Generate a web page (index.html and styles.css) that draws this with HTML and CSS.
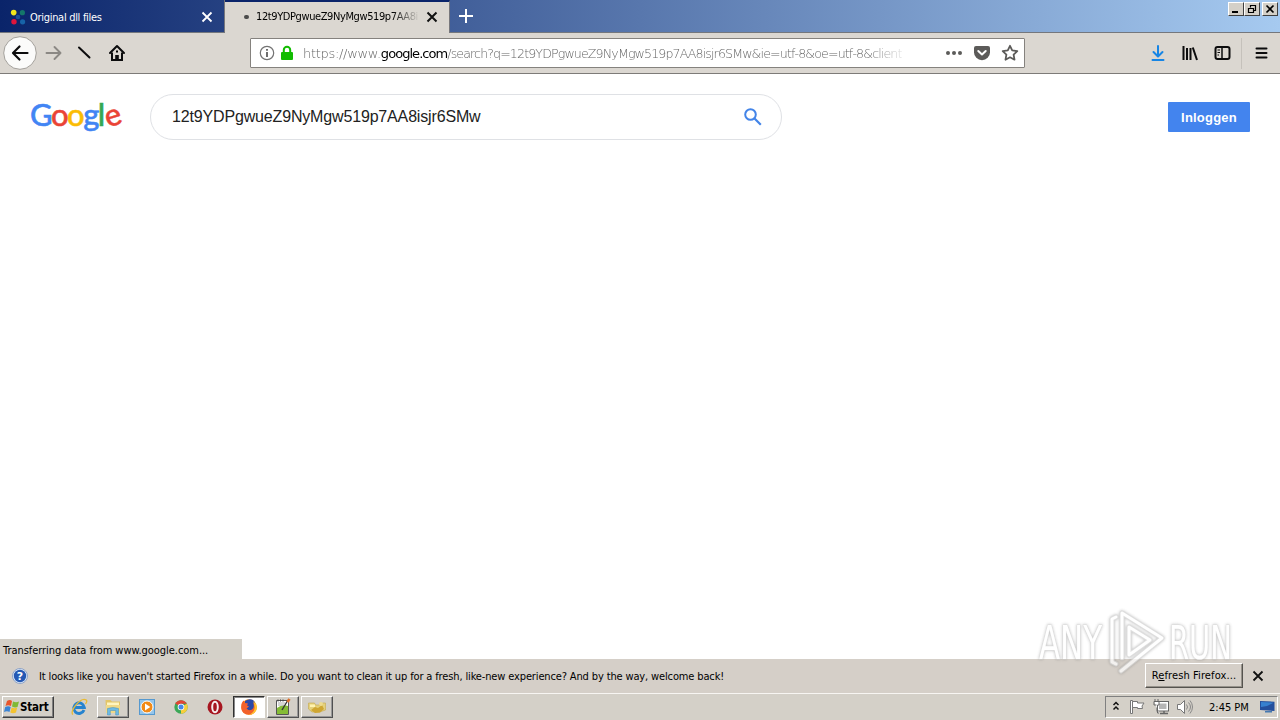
FILE: index.html
```html
<!DOCTYPE html>
<html lang="en">
<head>
<meta charset="utf-8">
<title>Google search</title>
<link rel="stylesheet" href="styles.css">
</head>
<body>
<div class="tabs">
  <div class="tab">
    <svg class="favicon" width="16" height="16" viewBox="0 0 16 16"><circle cx="3.700" cy="3.600" r="2.800" fill="#f2e51c"/><circle cx="12.400" cy="3.700" r="2.600" fill="#14776a"/><circle cx="8" cy="8" r="2.300" fill="#1c4f99"/><circle cx="4" cy="12.800" r="2.700" fill="#e0153b"/><circle cx="12.600" cy="12.800" r="2.600" fill="#1763a8"/></svg>
    <span class="tab-title first">Original dll files</span>
    <svg class="tab-close" width="12" height="12" viewBox="0 0 12 12"><path d="M1.500 1.500l9 9M10.500 1.500l-9 9" stroke="#fff" stroke-width="1.800"/></svg>
  </div>
  <div class="tab active">
    <i class="loading"></i>
    <span class="tab-title second">12t9YDPgwueZ9NyMgw519p7AA8i</span>
    <svg class="tab-close" width="12" height="12" viewBox="0 0 12 12"><path d="M1.500 1.500l9 9M10.500 1.500l-9 9" stroke="#111" stroke-width="2"/></svg>
  </div>
  <svg class="plus" width="16" height="16" viewBox="0 0 16 16"><path d="M8 1v14M1 8h14" stroke="#fff" stroke-width="2"/></svg>
  <div class="win">
    <span class="wbtn"><svg width="14" height="12"><path d="M3 9h6" stroke="#000" stroke-width="2"/></svg></span>
    <span class="wbtn"><svg width="14" height="12"><path d="M5.500 4.500v-2h5v5h-2M5 2.500h6M3.500 5.500h5v4h-5zM3 5.500h6" fill="none" stroke="#000" stroke-width="1.200"/></svg></span>
    <span class="wbtn last"><svg width="14" height="12"><path d="M3.500 2.500l7 7M10.500 2.500l-7 7" stroke="#000" stroke-width="1.700"/></svg></span>
  </div>
</div>
<div class="toolbar">
  <svg class="back" width="34" height="34" viewBox="0 0 34 34"><circle cx="17" cy="17" r="16.300" fill="#fbfbfa" stroke="#a3a09b"/><path d="M24.500 17H10.500M16.500 10.500L10 17l6.500 6.500" fill="none" stroke="#0c0c0d" stroke-width="2.200" stroke-linecap="round" stroke-linejoin="round"/></svg>
  <svg class="fwd" width="18" height="16" viewBox="0 0 18 16"><path d="M1.500 8h14M9.500 2L15.500 8l-6 6" fill="none" stroke="#8b8884" stroke-width="1.900" stroke-linecap="round" stroke-linejoin="round"/></svg>
  <svg class="slash" width="16" height="16" viewBox="0 0 16 16"><path d="M3 2.500l10.500 10" stroke="#0c0c0d" stroke-width="2" stroke-linecap="round"/></svg>
  <svg class="home" width="18" height="18" viewBox="0 0 18 18"><path d="M2 9l7-7 7 7" fill="none" stroke="#0c0c0d" stroke-width="2" stroke-linecap="round" stroke-linejoin="round"/><path d="M4 8.500V16h10V8.500" fill="none" stroke="#0c0c0d" stroke-width="2"/><path d="M7.200 16v-5h3.600v5z" fill="#0c0c0d"/><rect x="8" y="6.500" width="2" height="2"/></svg>
  <div class="url">
    <svg width="16" height="16" viewBox="0 0 16 16"><circle cx="8" cy="8" r="6.700" fill="none" stroke="#737373" stroke-width="1.200"/><path d="M8 7v5M8 4v1.700" stroke="#555" stroke-width="1.700"/></svg>
    <svg class="lock" width="14" height="16" viewBox="0 0 14 16"><path d="M3.800 8V5a3.200 3.200 0 0 1 6.400 0v3" fill="none" stroke="#12bc00" stroke-width="2"/><rect x="1" y="7" width="12" height="8" rx="1" fill="#12bc00"/></svg>
    <span class="address"><span class="scheme">https://www.</span><b>google.com</b><span class="path">/search?q=12t9YDPgwueZ9NyMgw519p7AA8isjr6SMw&amp;ie=utf-8&amp;oe=utf-8&amp;client</span></span>
    <svg width="18" height="16" viewBox="0 0 18 16"><g fill="#5c5b59"><circle cx="3" cy="8" r="2"/><circle cx="9" cy="8" r="2"/><circle cx="15" cy="8" r="2"/></g></svg>
    <svg class="pocket" width="16" height="16" viewBox="0 0 16 16"><path d="M2 1h12a2 2 0 0 1 2 2v4.200a8 8 0 0 1-16 0V3a2 2 0 0 1 2-2z" fill="#5c5b59"/><path d="M4.300 6L8 9.500 11.700 6" fill="none" stroke="#fff" stroke-width="2" stroke-linecap="round" stroke-linejoin="round"/></svg>
    <svg width="18" height="18" viewBox="0 0 18 18"><path d="M9 1.800l2.200 4.600 5.100.7-3.700 3.500.9 5.100L9 13.300l-4.500 2.400.9-5.100L1.700 7.100l5.100-.7z" fill="none" stroke="#5c5b59" stroke-width="1.800" stroke-linejoin="round"/></svg>
  </div>
  <svg class="download" width="16" height="18" viewBox="0 0 16 18"><path d="M8 2v10M3.500 8L8 12.500 12.500 8M2.500 16h11" fill="none" stroke="#1685e5" stroke-width="2" stroke-linecap="round" stroke-linejoin="round"/></svg>
  <svg class="lib" width="16" height="16" viewBox="0 0 16 16"><path d="M1.500 1v14M5 3v12M8.500 3v12M10.800 2.500L15 15" fill="none" stroke="#0c0c0d" stroke-width="2"/></svg>
  <svg class="side" width="17" height="16" viewBox="0 0 17 16"><rect x="1.500" y="2" width="14" height="12" rx="2" fill="none" stroke="#0c0c0d" stroke-width="2"/><path d="M8 2v12" stroke="#0c0c0d" stroke-width="1.500"/><path d="M3.500 5H6M3.500 7.500H6M3.500 10H5" stroke="#0c0c0d"/></svg>
  <i class="sep"></i>
  <svg class="menu" width="14" height="14" viewBox="0 0 14 14"><path d="M1.500 2.500h10M1.500 7h10M1.500 11.500h10" stroke="#0c0c0d" stroke-width="2" stroke-linecap="round"/></svg>
</div>
<div class="page">
  <div class="header">
    <div class="logo"><span class="bl">G</span><span class="rd">o</span><span class="yl">o</span><span class="bl">g</span><span class="gr">l</span><span class="rd tilt">e</span></div>
    <div class="search"><span class="query">12t9YDPgwueZ9NyMgw519p7AA8isjr6SMw</span>
      <svg width="20" height="20" viewBox="0 0 20 20"><circle cx="7.500" cy="7.500" r="5.300" fill="none" stroke="#4384e8" stroke-width="2"/><path d="M11.300 11.300l6.500 6.500" stroke="#4384e8" stroke-width="2.200"/></svg>
    </div>
    <div class="login">Inloggen</div>
  </div>
  <div class="status"><span>Transferring data from www.google.com...</span></div>
</div>
<div class="notice">
  <svg width="16" height="16" viewBox="0 0 16 16"><circle cx="8" cy="8" r="7.500" fill="#dce8f7" stroke="#7c96c0" stroke-width=".8"/><circle cx="8" cy="8" r="6.200" fill="#2559b4"/><text x="8" y="12.200" text-anchor="middle" class="qmark">?</text></svg>
  <span class="notice-text">It looks like you haven't started Firefox in a while. Do you want to clean it up for a fresh, like-new experience? And by the way, welcome back!</span>
  <div class="refresh"><span>R<u>e</u>fresh Firefox...</span></div>
  <svg class="nclose" width="12" height="12" viewBox="0 0 12 12"><path d="M1.500 1.500l9 9M10.500 1.500l-9 9" stroke="#111" stroke-width="1.800"/></svg>
</div>
<div class="taskbar">
  <div class="start"><svg width="16" height="16" viewBox="0 0 16 16"><path d="M3 2q3-2 5 0L7 7Q4 5.500 1.500 7z" fill="#e9562b"/><path d="M9 2.500q3 1.500 6 0L13.500 8Q11 9 8 7.500z" fill="#80b936"/><path d="M1.200 8q3-1.500 5.500 0L5.500 13Q3 11.500 0 13z" fill="#3b84d4"/><path d="M7.700 8.500q3 1.500 5.500 0L12 13.500Q9 15 6.300 13.500z" fill="#f4c330"/></svg><span>Start</span></div>
  <div class="task ie"><svg width="18" height="18" viewBox="0 0 18 18"><path d="M14 12A5.300 5.300 0 1 1 14.300 9.500H5" fill="none" stroke="#2583cf" stroke-width="2.900"/><path d="M3 16.500C-1 14 10-1 16 1.800 17.500 2.500 16.500 4.500 15.500 6" fill="none" stroke="#e8ba34" stroke-width="1.300"/></svg></div>
  <div class="task raised"><svg width="18" height="18" viewBox="0 0 18 18"><path d="M1.500 2h5l1.500 1.500h8V15h-14z" fill="#e3c566"/><path d="M3 4.500h12V9H3z" fill="#fff5bf"/><path d="M2 7h14v8H2z" fill="#f0d987"/><path d="M3.500 17v-6.500q5.500-2 11 0V17h-2.800v-4.500H6.300V17z" fill="#6dbbe5" stroke="#438eb8" stroke-width=".5"/></svg></div>
  <div class="task"><svg width="18" height="18" viewBox="0 0 18 18"><rect x="1.500" y="1.500" width="15" height="15" fill="#94c5eb" stroke="#5699cf"/><circle cx="9" cy="9" r="6" fill="#f28a17" stroke="#fff"/><path d="M7 5.500l5.300 3.500L7 12.500z" fill="#fff"/></svg></div>
  <div class="task"><svg width="18" height="18" viewBox="0 0 18 18"><circle cx="9" cy="9" r="6.700" fill="#3ba757"/><path d="M9 9L3.200 5.600A6.700 6.700 0 0 1 14.800 5.700H9z" fill="#e24435"/><path d="M9 9l5.800-3.300A6.700 6.700 0 0 1 9 15.700z" fill="#f8ce3a"/><circle cx="9" cy="9" r="3.300" fill="#fff"/><circle cx="9" cy="9" r="2.500" fill="#4587e8"/></svg></div>
  <div class="task"><svg width="18" height="18" viewBox="0 0 18 18"><circle cx="9" cy="9" r="7.500" fill="#a71620"/><ellipse cx="9" cy="9" rx="2.800" ry="5.200" fill="#a71620" stroke="#f5eeee" stroke-width="2"/></svg></div>
  <div class="task pressed"><svg width="18" height="18" viewBox="0 0 18 18"><circle cx="9" cy="9" r="7.800" fill="#ff9a1c"/><path d="M5 3q4-3 8-1 3 3 2 7-1 4-5 4-4-1-5-5z" fill="#2b4aa8"/><path d="M1.500 6Q2 4 3.500 2.500L5 5l3 .5-1 2 2 1-2.500 2q2 3 5.500 1 3-2 1-7 3 2 3.500 5-1 7-7.500 7.300Q2 16.500 1.200 10z" fill="#f2612b"/><path d="M13 3q5 4 3.500 9-3 5-8 5 5-2 6-6 .6-4-1.500-8z" fill="#ffc52e"/></svg></div>
  <div class="task raised"><svg width="18" height="18" viewBox="0 0 18 18"><path d="M2.500 2.500h12v14h-12z" fill="#fff" stroke="#555"/><path d="M3 10q5-4 11-2v8H3z" fill="#84bc35"/><path d="M4 5h7M4 7h6" stroke="#aaa"/><path d="M8 12l6-10" stroke="#333" stroke-width="1.400"/><path d="M13.500 4l2-3" stroke="#df6d28" stroke-width="2.500"/><path d="M4 1.500v2m2.500-2v2m2.500-2v2" stroke="#444"/></svg></div>
  <div class="task raised"><svg width="18" height="18" viewBox="0 0 18 18"><path d="M.5 5h6l1 2h7V5h3v7l-6 2H4L.5 11z" fill="#e4d17b" stroke="#c6a94a" stroke-width=".6"/><path d="M3 12l4-3 3 1 4-3 2 4-4 3.500-5 .5z" fill="#cfa632"/><path d="M2 6.500h5v2.500H2z" fill="#fff2af"/><circle cx="13" cy="6" r="2" fill="#eedc8e"/></svg></div>
  <div class="tray">
    <svg class="chev" width="8" height="12" viewBox="0 0 8 12"><path d="M1.500 4l2.500-2.500L6.500 4M1.500 8.500L4 6l2.500 2.500" fill="none" stroke="#111" stroke-width="1.500"/></svg>
    <svg class="flag" width="17" height="16" viewBox="0 0 17 16"><path d="M1.500 1.500h2v13h-2z" fill="#fff" stroke="#777"/><path d="M3.500 2.500h5v1.500h6.500L13 7l.5 2.500H8.500V8.500h-5z" fill="#fff" stroke="#777"/></svg>
    <svg class="net" width="17" height="16" viewBox="0 0 17 16"><rect x="4" y="2.500" width="11.500" height="9.500" fill="#fff" stroke="#666"/><rect x="6" y="4.500" width="7.500" height="5.500" fill="#b5b5b5"/><path d="M7 14.500h8M11 12v2" stroke="#666" stroke-width="1.500"/><path d="M1 2.500h5V6H4.500v8H6" fill="#fff" stroke="#666"/><path d="M2 0v2.500M5 0v2.500" stroke="#666"/><path d="M1 2.500V6h2.500" fill="none" stroke="#666"/></svg>
    <svg class="sound" width="17" height="16" viewBox="0 0 17 16"><path d="M1.500 5.500h3l4-4v13l-4-4h-3z" fill="#fff" stroke="#777"/><path d="M10.500 5.500q2 2.500 0 5M12.500 3.500q4 4.500 0 9M14 1.500q5 6.500 0 13" fill="none" stroke="#888"/></svg>
    <span class="clock">2:45 PM</span>
    <svg width="15" height="14" viewBox="0 0 15 14"><path d="M0 1l14.500.7V11L0 10z" fill="#244f9d"/><path d="M1 2l12.500.7L7 6 1 7z" fill="#3680cf"/><path d="M5 11h7v1.500H5z" fill="#4579b0"/></svg>
  </div>
</div>
<svg class="mark" width="214" height="74" viewBox="0 0 214 74">
  <g class="soft"><text x="11" y="53" textLength="63" lengthAdjust="spacingAndGlyphs">ANY</text><text x="141" y="53" textLength="63" lengthAdjust="spacingAndGlyphs">RUN</text></g>
  <g fill="none" stroke-linejoin="round" stroke-linecap="round"><path class="edge" d="M88 11l-4 2v43l4 2M94 52V7l40 25-41 33M101 21l21 13-21 15z"/><path class="core" d="M88 11l-4 2v43l4 2M94 52V7l40 25-41 33M101 21l21 13-21 15z"/></g>
</svg>
</body>
</html>
```
FILE: styles.css
```css
* { box-sizing: border-box; }
body { margin: 0; width: 1280px; height: 720px; overflow: hidden; display: flex; flex-direction: column; position: relative; background: #fff; color: #000; font: 11px "DejaVu Sans Condensed", "DejaVu Sans", sans-serif; font-stretch: condensed; white-space: nowrap; }
svg { display: block; flex: none; }
.tabs { height: 33px; flex: none; display: flex; align-items: flex-start; background: linear-gradient(90deg, #0a246a, #a6caf0); border-bottom: 1px solid #74777d; }
.tab { width: 225px; height: 32px; display: flex; align-items: center; padding: 2px 11px 0 10px; border-right: 1px solid #77777c; }
.tab.active { height: 33px; border-top: 2px solid #0a246a; background: #dbd7d1; padding: 0 11px 2px 19px; }
.favicon { margin-right: 4px; }
.tab-title { flex: 1; color: #fff; }
.first { letter-spacing: -.3px; }
.second { color: #000; letter-spacing: -.4px; -webkit-mask-image: linear-gradient(90deg, #000 83%, transparent); mask-image: linear-gradient(90deg, #000 83%, transparent); }
.tab-close { margin-left: 6px; }
.loading { width: 5px; height: 4px; border-radius: 2px; background: #4b4b4b; margin-right: 7px; }
.plus { margin: 8px 0 0 8px; }
.win { margin: 2px 2px 0 auto; display: flex; }
.wbtn { width: 16px; height: 14px; background: #d4d0c8; border: 1px solid; border-color: #fff #404040 #404040 #fff; }
.last { margin-left: 2px; }
.toolbar { height: 41px; flex: none; display: flex; align-items: center; background: #dbd7d1; border-bottom: 1px solid #7d7b78; padding-left: 3px; }
.fwd { margin-left: 8px; }
.slash { margin-left: 13px; }
.home { margin-left: 16px; }
.url { width: 775px; height: 30px; margin-left: 124px; background: #fff; border: 1px solid #85827e; border-radius: 1px; display: flex; align-items: center; padding: 0 5px 0 8px; }
.lock { margin-left: 5px; }
.address { width: 607px; margin: 0 35px 0 9px; color: #666; font: 13px "DejaVu Sans", sans-serif; font-weight: 200; -webkit-mask-image: linear-gradient(90deg, #000 93%, transparent); mask-image: linear-gradient(90deg, #000 93%, transparent); }
.scheme { letter-spacing: -.3px; }
.path { font-size: 12.600px; letter-spacing: -.87px; }
.address b { color: #000; font-weight: 400; letter-spacing: -.95px; }
.pocket { margin: 0 11px; flex: none; }
.download { margin-left: 125px; }
.lib { margin-left: 16px; }
.side { margin-left: 16px; }
.sep { width: 1px; height: 31px; margin: 0 13px 0 10px; background: #c5c1bb; }
.page { flex: 1; display: flex; flex-direction: column; justify-content: space-between; }
.header { display: flex; padding: 20px 30px 0; }
.logo { width: 120px; height: 46px; font: 500 31px/40px Lato, sans-serif; letter-spacing: -1.5px; -webkit-text-stroke: .5px; }
.bl { color: #4285f4; }
.rd { color: #ea4335; }
.yl { color: #fbbc05; }
.gr { color: #34a853; }
.tilt { display: inline-block; transform: rotate(-18deg); }
.search { width: 632px; height: 46px; border: 1px solid #dfe1e5; border-radius: 23px; display: flex; align-items: center; justify-content: space-between; padding: 0 18px 0 21px; }
.query { font: 16px "Liberation Sans", Arial, sans-serif; color: #222; letter-spacing: -.16px; }
.login { width: 82px; height: 30px; margin: 8px 0 0 auto; background: #4384ee; border-radius: 1px; color: #fff; text-align: center; font: bold 13px/31px "Liberation Sans", Arial, sans-serif; letter-spacing: .2px; }
.status { width: 242px; height: 20px; background: #d4d0c8; padding-left: 3px; line-height: 23px; letter-spacing: -.05px; }
.notice { height: 34px; flex: none; background: #d5cfc8; display: flex; align-items: center; padding: 0 16px 0 12px; }
.qmark { font: bold 11px "DejaVu Sans", sans-serif; fill: #fff; }
.notice-text { margin-left: 11px; letter-spacing: -.138px; }
.refresh { width: 98px; height: 25px; margin-left: auto; margin-top: -2px; border: 1px solid; border-color: #fff #55534f #55534f #fff; box-shadow: inset -1px -1px #96928b; text-align: center; line-height: 24px; letter-spacing: .1px; }
.nclose { margin-left: 9px; }
.taskbar { height: 27px; flex: none; background: #d4d0c8; border-top: 1px solid #f7f5f2; display: flex; align-items: center; padding: 0 2px; }
.start { width: 52px; height: 22px; border: 1px solid; border-color: #fff #404040 #404040 #fff; box-shadow: inset -1px -1px #808080; display: flex; align-items: center; padding-left: 1px; font: bold 11.500px "DejaVu Sans Condensed", "DejaVu Sans", sans-serif; letter-spacing: -.2px; }
.task { width: 32px; height: 22px; margin-right: 2px; display: flex; align-items: center; justify-content: center; }
.ie { margin-left: 9px; }
.raised { border: 1px solid; border-color: #fff #505050 #505050 #fff; box-shadow: inset -1px -1px #999; }
.pressed { background: #fff; border: 1px solid; border-color: #303030 #fff #fff #303030; box-shadow: inset 1px 1px #888; }
.tray { width: 173px; height: 22px; margin-left: auto; border: 1px solid; border-color: #808080 #fff #fff #808080; display: flex; align-items: center; padding: 0 2px 0 6px; }
.flag { margin-left: 9px; }
.net { margin-left: 7px; }
.sound { margin-left: 6px; }
.clock { width: 40px; margin: 0 11px 0 auto; }
.mark { position: absolute; left: 1028px; top: 606px; filter: drop-shadow(0 0 1.500px rgba(90, 90, 90, .55)); opacity: .72; }
.soft text { font: 46px "Liberation Sans Narrow", "DejaVu Sans Condensed", sans-serif; fill: #fff; stroke: #d2d2d2; stroke-width: 1px; paint-order: stroke; }
.edge { stroke: #d2d2d2; stroke-width: 5px; }
.core { stroke: #fff; stroke-width: 3px; }
```
